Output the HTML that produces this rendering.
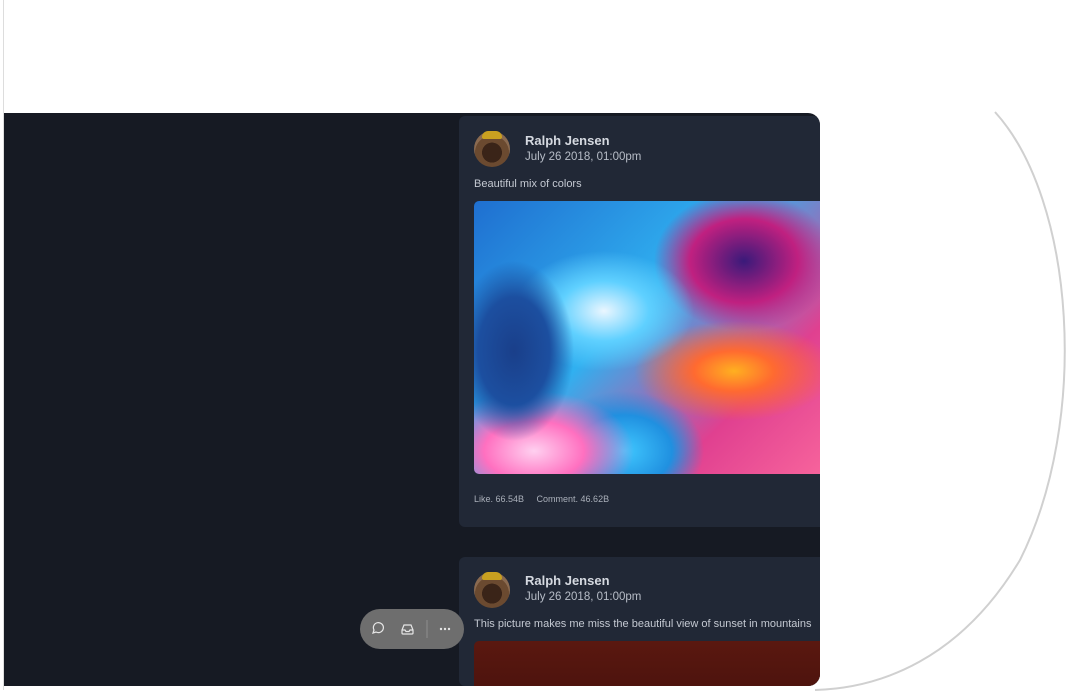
<!DOCTYPE html>
<html><head><meta charset="utf-8"><style>
html,body{margin:0;width:1076px;height:694px;overflow:hidden}
body{background:#fff;position:relative;font-family:"Liberation Sans",sans-serif}
.panel{position:absolute;left:4px;top:113px;width:816px;height:573px;background:#161a23;border-radius:0 12px 12px 0;overflow:hidden}
.card{position:absolute;left:455px;width:400px;background:#212836;border-radius:6px;overflow:hidden}
.av{position:absolute;left:15px;width:36px;height:36px;border-radius:50%;background:radial-gradient(circle at 50% 60%,#3a2418 0 35%,#6b4a30 36% 60%,#8a6a50 61%)}
.av:before{content:"";position:absolute;left:8px;top:0;width:20px;height:8px;border-radius:10px 10px 3px 3px;background:#c9a020}
.name{position:absolute;left:66px;color:#d5d9e0;font-weight:bold;font-size:13px}
.date{position:absolute;left:66px;color:#b8bec8;font-size:11.5px}
.txt{position:absolute;left:15px;color:#c4c9d2;font-size:11px;white-space:nowrap}
</style></head><body>
<div style="position:absolute;left:3px;top:0;width:1px;height:690px;background:#ddd"></div>
<svg style="position:absolute;left:0;top:0" width="1076" height="694"><path d="M995 112 C1075 200 1090 420 1020 560 C960 660 880 688 815 690" fill="none" stroke="#d0d0d0" stroke-width="2"/></svg>
<div class="panel">
 <div class="card" style="top:3px;height:411px">
  <div class="av" style="top:15px"></div>
  <div class="name" style="top:17px">Ralph Jensen</div>
  <div class="date" style="top:35px">July 26 2018, 01:00pm</div>
  <div class="txt" style="top:62px">Beautiful mix of colors</div>
  <div style="position:absolute;left:15px;top:85px;width:400px;height:273px;border-radius:5px;background:
   radial-gradient(ellipse 60px 90px at 40px 150px,#1a3f8a 0,#1c4fa0 60%,transparent 100%),
   radial-gradient(ellipse 90px 60px at 130px 110px,#eaf6ff 0,#5fd0ff 50%,transparent 100%),
   radial-gradient(ellipse 100px 50px at 260px 170px,#ffb020 0,#ff6a30 40%,transparent 100%),
   radial-gradient(ellipse 100px 60px at 60px 250px,#ffd0f0 0,#ff70c0 50%,transparent 100%),
   radial-gradient(ellipse 90px 70px at 270px 60px,#3a1a7a 0,#c02080 60%,transparent 100%),
   radial-gradient(ellipse 80px 60px at 150px 250px,#40c8ff 0,#2090e0 60%,transparent 100%),
   linear-gradient(135deg,#1f6fd0,#30b0f0 40%,#e04090 70%,#ff70a0)"></div>
  <div class="txt" style="top:378px;font-size:9px;color:#aab0ba">Like. 66.54B &nbsp;&nbsp;&nbsp; Comment. 46.62B</div>
 </div>
 <div class="card" style="top:444px;height:129px">
  <div class="av" style="top:15px"></div>
  <div class="name" style="top:16px">Ralph Jensen</div>
  <div class="date" style="top:34px">July 26 2018, 01:00pm</div>
  <div class="txt" style="top:61px">This picture makes me miss the beautiful view of sunset in mountains</div>
  <div style="position:absolute;left:15px;top:84px;width:400px;height:60px;border-radius:5px;background:linear-gradient(180deg,#5a1810,#4a120c)"></div>
 </div>
 <div style="position:absolute;left:356px;top:496px;width:104px;height:40px;border-radius:20px;background:#6e6e6e">
  <svg width="104" height="40" fill="none" stroke="#e6e6e6" stroke-width="1.2">
   <path d="M13 24 l1-3 a5 5 0 1 1 2 2 z"/>
   <path d="M42 21 l2-5 h7 l2 5 v3 a1 1 0 0 1-1 1 h-9 a1 1 0 0 1-1-1z M42 21 h3 l1 1.5 h3 l1-1.5 h3"/>
   <path d="M67 11 v18" stroke="#8a8a8a"/>
   <circle cx="81" cy="20" r=".6" fill="#e6e6e6"/><circle cx="85" cy="20" r=".6" fill="#e6e6e6"/><circle cx="89" cy="20" r=".6" fill="#e6e6e6"/>
  </svg>
 </div>
</div>
</body></html>
